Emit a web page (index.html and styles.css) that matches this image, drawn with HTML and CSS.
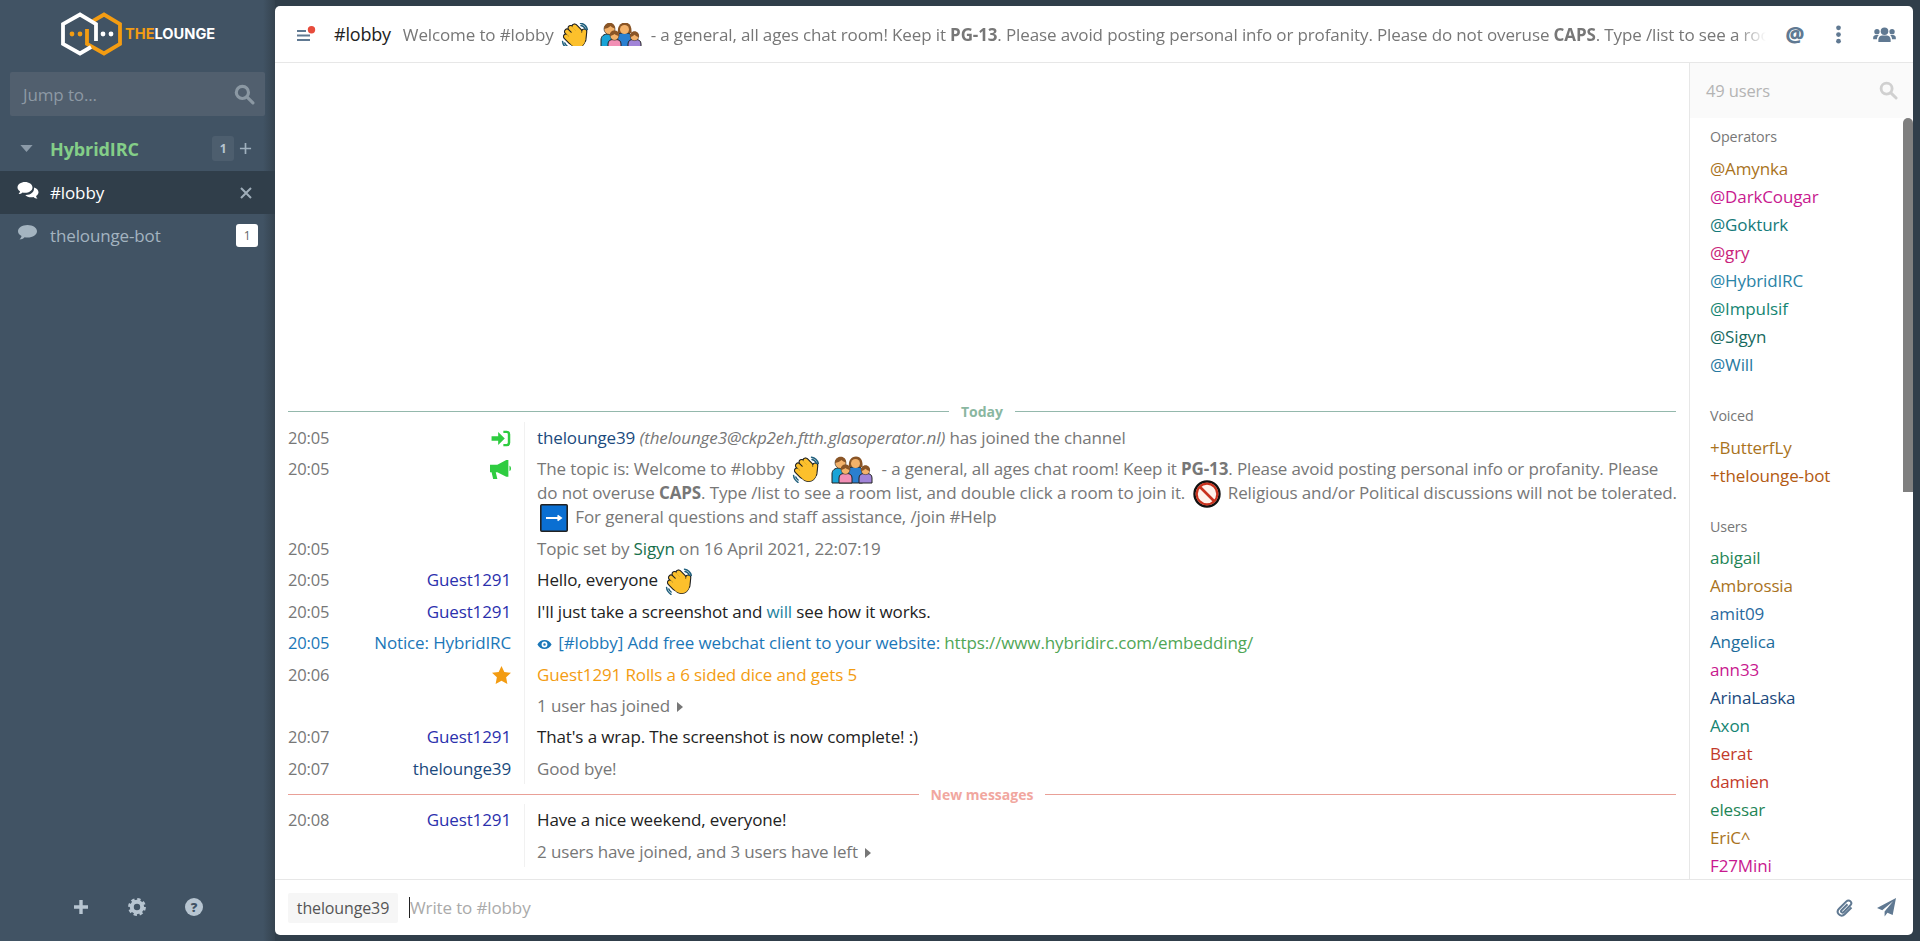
FILE: index.html
```html
<!DOCTYPE html>
<html lang="en">
<head>
<meta charset="utf-8">
<title>#lobby — The Lounge</title>
<link rel="stylesheet" href="styles.css">
</head>
<body>
<svg class="defs" aria-hidden="true">
  <symbol id="hand-shape" viewBox="0 0 28 28">
    <ellipse cx="16" cy="17" rx="8" ry="8.600" transform="rotate(-40 16 17)"/>
    <rect x="1.500" y="14.500" width="12" height="5" rx="2.500" transform="rotate(45 7.500 17)"/>
    <rect x="2.200" y="10.300" width="14" height="5" rx="2.500" transform="rotate(45 9.200 12.800)"/>
    <rect x="5.800" y="6.700" width="14" height="5" rx="2.500" transform="rotate(45 12.800 9.200)"/>
    <rect x="10" y="4.500" width="12" height="5" rx="2.500" transform="rotate(45 16 7)"/>
    <rect x="20.300" y="7" width="5" height="13" rx="2.500" transform="rotate(6 22.800 13.500)"/>
  </symbol>
  <symbol id="wave" viewBox="0 0 28 28">
    <use href="#hand-shape" fill="#222" stroke="#222" stroke-width="1.200"/>
    <g fill="#fcc02c">
      <ellipse cx="16" cy="17" rx="8" ry="8.600" transform="rotate(-40 16 17)"/>
      <rect x="2" y="15" width="11" height="4" rx="2" transform="rotate(45 7.500 17)"/>
      <rect x="2.700" y="10.800" width="13" height="4" rx="2" transform="rotate(45 9.200 12.800)"/>
      <rect x="6.300" y="7.200" width="13" height="4" rx="2" transform="rotate(45 12.800 9.200)"/>
      <rect x="10.500" y="5" width="11" height="4" rx="2" transform="rotate(45 16 7)"/>
      <rect x="20.800" y="7.500" width="4" height="12" rx="2" transform="rotate(6 22.800 13.500)"/>
    </g>
    <path d="M1.600 19.500c.2 2.800 1.600 5 4.400 6.800M3.800 21c.5 1.300 1.200 2.200 2.300 3M19.500 1.200c3.400.5 5.900 2.800 6.800 6.300M20 3.600c2 .4 3.500 1.600 4.200 3.600" fill="none" stroke="#1f5f7d" stroke-width="1.500" stroke-linecap="round"/>
  </symbol>
  <symbol id="family" viewBox="0 0 44 28">
    <path d="M2 27v-9c0-4 3-6 7-6h3c4 0 6 2 6 6v9z" fill="#1aa3d6" stroke="#222"/>
    <circle cx="10.500" cy="7" r="5.500" fill="#f4b26a" stroke="#222" stroke-width=".6"/>
    <path d="M5 7c0-4 2.500-6.200 5.800-6.200S16 3 16 6.500c-2-.5-3.500-1.500-4.500-2.500C10 5.500 7.500 6.500 5 7z" fill="#8a5526"/>
    <path d="M18 27V15c0-2 2-4 5-4h5c3 0 4.500 2 4.500 4v12z" fill="#2a7fd0" stroke="#222"/>
    <path d="M19 11c-1-6 2-10.500 7-10.500S33 5 32.500 11z" fill="#8a5526"/>
    <circle cx="25.500" cy="7.500" r="4.500" fill="#f4b26a"/>
    <path d="M9 27v-5c0-3 2-4.500 5-4.500h3c3 0 5 1.500 5 4.500v5z" fill="#f28fb5" stroke="#222"/>
    <circle cx="15.500" cy="14" r="4.300" fill="#f4b26a" stroke="#222" stroke-width=".5"/>
    <path d="M10.700 14c-.2-3.500 2-5.500 4.800-5.500s5 2 4.800 5.500c-2-.3-3.500-1-4.800-2-1.300 1-2.800 1.700-4.800 2z" fill="#8a5526"/>
    <path d="M29 27v-5c0-3 2-4.500 5-4.500h3c3 0 5 1.500 5 4.500v5z" fill="#a184d8" stroke="#222"/>
    <circle cx="35.500" cy="14.500" r="4.100" fill="#f4b26a" stroke="#222" stroke-width=".5"/>
    <path d="M31 15c-.5-3.500 1.800-5.800 4.500-5.800S40.500 11.500 40 15c-2-.3-3.300-1-4.500-2.200-1.200 1.200-2.500 1.900-4.500 2.200z" fill="#8a5526"/>
  </symbol>
  <symbol id="noentry" viewBox="0 0 28 28">
    <circle cx="14" cy="14" r="12.500" fill="#fff3ec" stroke="#111" stroke-width="2.400"/>
    <circle cx="14" cy="14" r="10.300" fill="none" stroke="#c8321e" stroke-width="2.200"/>
    <path d="M7 7l14 14" stroke="#c8321e" stroke-width="2.600"/>
  </symbol>
  <symbol id="arrow" viewBox="0 0 28 28">
    <rect x=".8" y=".8" width="26.400" height="26.400" rx="1" fill="#0a6fd2" stroke="#222" stroke-width="1.600"/>
    <path d="M6 14h15M17.500 11.500l3.500 2.500-3.500 2.500" fill="none" stroke="#fff" stroke-width="1.800"/>
  </symbol>
</svg>

<aside class="sidebar">
  <div class="brand">
    <svg class="brand-mark" viewBox="0 0 64 44">
      <polyline points="33,9 44,2.500 60,12 60,32 44,41.500 27,32 27,17" class="hex-orange"/>
      <polyline points="31,35 20,41.500 3,32 3,12 20,2.500 36,12 36,29" class="hex-white"/>
      <circle cx="12" cy="22" r="2.400" class="dot-orange"/><circle cx="20" cy="22" r="2.400" class="dot-orange"/>
      <circle cx="43" cy="22" r="2.400" class="dot-white"/><circle cx="51" cy="22" r="2.400" class="dot-white"/>
    </svg>
    <span class="brand-text"><span class="brand-the">THE</span>LOUNGE</span>
  </div>
  <div class="jump">
    <span class="jump-text">Jump to...</span>
    <svg class="jump-icon" viewBox="0 0 20 20"><circle cx="8" cy="8" r="5.800"/><path d="M12.500 12.500l5.500 5.500"/></svg>
  </div>
  <div class="network">
    <svg class="caret-down" viewBox="0 0 14 8"><path d="M0 0h14L7 8z"/></svg>
    <span class="network-name">HybridIRC</span>
    <span class="network-badge">1</span>
    <svg class="network-add" viewBox="0 0 14 14"><path d="M7 1v12M1 7h12"/></svg>
  </div>
  <div class="channel channel-active">
    <svg class="channel-icon" viewBox="0 0 22 18"><path class="bubble-white" d="M8 1c4 0 7.500 2.300 7.500 5.400S12 11.800 8 11.800c-.9 0-1.700-.1-2.500-.3C4.500 12.500 3 13 1.500 13c.8-.8 1.400-1.800 1.500-2.800C1.400 9.300.5 7.900.5 6.400.5 3.300 4 1 8 1z"/><path class="bubble-white" d="M17 6.500c2.600.7 4.500 2.500 4.500 4.700 0 1.500-.9 2.800-2.400 3.700.1 1 .7 2 1.400 2.600-1.500 0-3-.5-4-1.500-.7.2-1.500.3-2.400.3-2.400 0-4.600-.9-5.800-2.300 5.400.3 9.300-3.100 8.700-7.500z"/></svg>
    <span class="channel-name">#lobby</span>
    <svg class="channel-close" viewBox="0 0 12 12"><path d="M1 1l10 10M11 1L1 11"/></svg>
  </div>
  <div class="channel">
    <svg class="channel-icon" viewBox="0 0 22 18"><path class="bubble-muted" d="M10.500 1C15.800 1 20 3.800 20 7.300s-4.200 6.300-9.500 6.300c-1 0-2-.1-2.900-.3C6.300 14.700 4.500 15.500 2.500 15.500c1-1 1.800-2.100 2-3.400C2.400 11 1 9.300 1 7.300 1 3.800 5.200 1 10.500 1z"/></svg>
    <span class="channel-name channel-name-muted">thelounge-bot</span>
    <span class="channel-badge">1</span>
  </div>
  <div class="sidebar-spacer"></div>
  <div class="sidebar-footer">
    <svg class="foot-plus" viewBox="0 0 16 16"><path d="M8 1v14M1 8h14"/></svg>
    <svg class="foot-cog" viewBox="0 0 18 18"><circle cx="9" cy="9" r="5.200" class="cog-body"/><circle cx="9" cy="9" r="7.600" class="cog-teeth"/></svg>
    <span class="foot-help">?</span>
  </div>
</aside>

<main class="card">
  <header class="topbar">
    <svg class="menu-icon" viewBox="0 0 20 16"><path class="menu-lines" d="M1 5h9M1 9.500h13M1 14h13"/><circle cx="15.500" cy="3.700" r="3.700" class="menu-dot"/></svg>
    <span class="top-channel">#lobby</span>
    <div class="top-topic">Welcome to #lobby <svg class="emoji"><use href="#wave"/></svg> <svg class="emoji emoji-family"><use href="#family"/></svg> - a general, all ages chat room! Keep it <b>PG-13</b>. Please avoid posting personal info or profanity. Please do not overuse <b>CAPS</b>. Type /list to see a room list, and double click a room to join it.</div>
    <span class="top-at">@</span>
    <svg class="top-kebab" viewBox="0 0 6 20"><circle cx="3" cy="3" r="2.500"/><circle cx="3" cy="10" r="2.500"/><circle cx="3" cy="17" r="2.500"/></svg>
    <svg class="top-users" viewBox="0 0 24 18"><circle cx="12" cy="5.500" r="4"/><path d="M5.500 17v-2.500c0-3 2-4.500 4-4.500h5c2 0 4 1.500 4 4.500V17z"/><circle cx="4" cy="6" r="2.800"/><circle cx="20" cy="6" r="2.800"/><path d="M0 14v-1.500C0 10.500 1.500 9.500 3 9.500h3c-1 1-2 2.500-2 4.500zM24 14v-1.500c0-2-1.500-3-3-3h-3c1 1 2 2.500 2 4.500z"/></svg>
  </header>
  <div class="body-row">
    <section class="chat">
      <div class="marker marker-date"><span class="marker-label">Today</span></div>

      <div class="row">
        <span class="time">20:05</span>
        <span class="from"><svg class="ico-join" viewBox="0 0 20 18"><path d="M0 6.500h7V2l7 7-7 7v-4.500H0z"/><path class="ico-join-bracket" d="M12.500 2H16c1.500 0 2.500 1 2.500 2.500v9c0 1.500-1 2.500-2.500 2.500h-3.500"/></svg></span>
        <div class="content"><span class="nick-navy">thelounge39</span> <i class="hostmask">(thelounge3@ckp2eh.ftth.glasoperator.nl)</i> <span class="muted">has joined the channel</span></div>
      </div>
      <div class="row row-topic">
        <span class="time">20:05</span>
        <span class="from"><svg class="ico-bullhorn" viewBox="0 0 20 18"><path d="M0 4.500h7L15.500 0H17.500V16H15.500L7 11.500H5.500L7 18H3L1.500 11.500H0z"/><path d="M18.500 5.500c.9.300 1.500 1.300 1.500 2.500s-.6 2.200-1.500 2.500z"/></svg></span>
        <div class="content muted">The topic is: Welcome to #lobby <svg class="emoji"><use href="#wave"/></svg> <svg class="emoji emoji-family"><use href="#family"/></svg> - a general, all ages chat room! Keep it <b>PG-13</b>. Please avoid posting personal info or profanity. Please<br>do not overuse <b>CAPS</b>. Type /list to see a room list, and double click a room to join it. <svg class="emoji"><use href="#noentry"/></svg> Religious and/or Political discussions will not be tolerated.<br><svg class="emoji"><use href="#arrow"/></svg> For general questions and staff assistance, /join #Help</div>
      </div>
      <div class="row">
        <span class="time">20:05</span>
        <span class="from"></span>
        <div class="content muted">Topic set by <span class="nick-sigyn">Sigyn</span> on 16 April 2021, 22:07:19</div>
      </div>
      <div class="row">
        <span class="time">20:05</span>
        <span class="from nick-guest">Guest1291</span>
        <div class="content">Hello, everyone <svg class="emoji"><use href="#wave"/></svg></div>
      </div>
      <div class="row">
        <span class="time">20:05</span>
        <span class="from nick-guest">Guest1291</span>
        <div class="content">I'll just take a screenshot and <span class="nick-will">will</span> see how it works.</div>
      </div>
      <div class="row row-notice">
        <span class="time">20:05</span>
        <span class="from">Notice: HybridIRC</span>
        <div class="content"><svg class="ico-eye" viewBox="0 0 18 12"><path fill-rule="evenodd" d="M9 .5c3.800 0 7 2.400 8.500 5.500C16 9.100 12.800 11.500 9 11.500S2 9.100.5 6C2 2.900 5.200.5 9 .5zM9 2.500a3.500 3.500 0 100 7 3.500 3.500 0 000-7zM9 4.500a1.500 1.500 0 110 3 1.500 1.500 0 010-3z"/></svg> [#lobby] Add free webchat client to your website: <span class="link">https://www.hybridirc.com/embedding/</span></div>
      </div>
      <div class="row row-action">
        <span class="time">20:06</span>
        <span class="from"><svg class="ico-star" viewBox="0 0 20 19"><path d="M10 0l3 6.300 7 .9-5.100 4.800 1.300 6.900L10 15.600l-6.200 3.300L5.100 12 0 7.200l7-.9z"/></svg></span>
        <div class="content">Guest1291 Rolls a 6 sided dice and gets 5</div>
      </div>
      <div class="row">
        <span class="time"></span>
        <span class="from"></span>
        <div class="content muted">1 user has joined <svg class="ico-caret" viewBox="0 0 6 10"><path d="M0 0l6 5-6 5z"/></svg></div>
      </div>
      <div class="row">
        <span class="time">20:07</span>
        <span class="from nick-guest">Guest1291</span>
        <div class="content">That's a wrap. The screenshot is now complete! :)</div>
      </div>
      <div class="row">
        <span class="time">20:07</span>
        <span class="from nick-navy">thelounge39</span>
        <div class="content muted">Good bye!</div>
      </div>

      <div class="marker marker-new"><span class="marker-label">New messages</span></div>

      <div class="row">
        <span class="time">20:08</span>
        <span class="from nick-guest">Guest1291</span>
        <div class="content">Have a nice weekend, everyone!</div>
      </div>
      <div class="row">
        <span class="time"></span>
        <span class="from"></span>
        <div class="content muted">2 users have joined, and 3 users have left <svg class="ico-caret" viewBox="0 0 6 10"><path d="M0 0l6 5-6 5z"/></svg></div>
      </div>
    </section>

    <aside class="users">
      <div class="users-head">
        <span class="users-count">49 users</span>
        <svg class="users-search" viewBox="0 0 20 20"><circle cx="8" cy="8" r="5.800"/><path d="M12.500 12.500l5.500 5.500"/></svg>
      </div>
      <div class="users-list">
        <div class="users-scroll"></div>
        <div class="group-label">Operators</div>
        <div class="user c-amber">@Amynka</div>
        <div class="user c-magenta">@DarkCougar</div>
        <div class="user c-teal">@Gokturk</div>
        <div class="user c-rose">@gry</div>
        <div class="user c-sky">@HybridIRC</div>
        <div class="user c-sea">@Impulsif</div>
        <div class="user c-pine">@Sigyn</div>
        <div class="user c-steel">@Will</div>
        <div class="group-label group-next">Voiced</div>
        <div class="user c-amber">+ButterfLy</div>
        <div class="user c-rust">+thelounge-bot</div>
        <div class="group-label group-next group-tight">Users</div>
        <div class="user c-green">abigail</div>
        <div class="user c-amber">Ambrossia</div>
        <div class="user c-blue">amit09</div>
        <div class="user c-blue2">Angelica</div>
        <div class="user c-magenta">ann33</div>
        <div class="user c-navy">ArinaLaska</div>
        <div class="user c-sea">Axon</div>
        <div class="user c-red">Berat</div>
        <div class="user c-red">damien</div>
        <div class="user c-green">elessar</div>
        <div class="user c-amber">EriC^</div>
        <div class="user c-magenta">F27Mini</div>
      </div>
    </aside>
  </div>
  <footer class="inputbar">
    <span class="nick-box">thelounge39</span>
    <div class="input-field"><span class="caret-line"></span><span class="placeholder">Write to #lobby</span></div>
    <svg class="ico-clip" viewBox="0 0 18 20"><path d="M15.500 9.500l-6.800 6.800c-1.800 1.800-4.500 1.800-6-.1-1.400-1.600-1.200-3.900.3-5.400l7.400-7.400c1.200-1.200 3-1.200 4.100 0 1 1.100 1 2.800-.1 3.900l-6.900 6.900c-.6.600-1.500.6-2 0-.5-.5-.5-1.400 0-1.900l6-6"/></svg>
    <svg class="ico-send" viewBox="0 0 20 20"><path d="M20 0L16.500 18l-5.500-2.400L8 19.500v-5.200L17 3.500 5.500 13 0 10.500z"/></svg>
  </footer>
</main>
</body>
</html>
```
FILE: styles.css
```css
* { box-sizing: border-box; }
html, body { height: 100%; margin: 0; }
body {
  display: flex;
  overflow: hidden;
  background: #303e4a;
  font-family: "Open Sans", "Noto Sans", sans-serif;
  font-size: 17px;
  letter-spacing: -0.13px;
  color: #222;
}
.defs { position: absolute; width: 0; height: 0; }

/* sidebar */
.sidebar {
  width: 275px;
  flex: none;
  display: flex;
  flex-direction: column;
  background: linear-gradient(to right, #415364 263px, #35434f 275px);
  color: #b7c5d1;
}
.brand { height: 68px; display: flex; align-items: center; padding-left: 60px; gap: 1px; }
.brand-mark { width: 64px; height: 44px; flex: none; fill: none; }
.hex-orange { fill: none; stroke: #f39c12; stroke-width: 3.8; }
.hex-white { fill: none; stroke: #fff; stroke-width: 3.8; }
.dot-orange { fill: #f39c12; }
.dot-white { fill: #fff; }
.brand-text { font-family: Inter, sans-serif; font-weight: 700; font-size: 14.6px; letter-spacing: 0; color: #fff; }
.brand-the { color: #f39c12; }
.jump {
  margin: 4px 10px 0;
  height: 44px;
  flex: none;
  display: flex;
  align-items: center;
  justify-content: space-between;
  padding: 0 10px 0 13px;
  background: #515f6e;
  border-radius: 2px;
}
.jump-text { color: #8d99a4; font-size: 17px; }
.jump-icon { width: 21px; height: 21px; fill: none; stroke: #8b98a3; stroke-width: 3; stroke-linecap: round; }
.network { margin: 15px 0 5px; height: 35px; flex: none; display: flex; align-items: center; padding-left: 20px; }
.caret-down { width: 13px; height: 7px; fill: #8b9aa8; flex: none; }
.network-name { margin-left: 17px; font-weight: 700; font-size: 18px; color: #84ce88; flex: 1; letter-spacing: -0.1px; }
.network-badge {
  width: 22px; height: 25px; display: flex; align-items: center; justify-content: center;
  background: #4d5e6e; border-radius: 3px; font-size: 12px; font-weight: 700; color: #b7c5d1;
}
.network-add { width: 13px; height: 13px; margin: 0 23px 0 5px; fill: none; stroke: #9fb0be; stroke-width: 1.800; }
.channel { height: 43px; flex: none; display: flex; align-items: center; padding-left: 17px; font-size: 17px; }
.channel-active { background: #303e4a; color: #fff; }
.channel-icon { width: 22px; height: 18px; flex: none; margin-top: -5px; }
.bubble-white { fill: #fff; }
.bubble-muted { fill: #a4b4c0; }
.channel-name { margin-left: 11px; flex: 1; }
.channel-name-muted { color: #a4b4c0; }
.channel-close { width: 12px; height: 12px; margin-right: 23px; fill: none; stroke: #9fadb9; stroke-width: 2; }
.channel-badge {
  width: 22px; height: 23px; margin-right: 17px; background: #fff; color: #666; border-radius: 3px;
  font-size: 12px; display: flex; align-items: center; justify-content: center;
}
.sidebar-spacer { flex: 1; }
.sidebar-footer { height: 68px; flex: none; display: flex; align-items: center; padding-left: 73px; gap: 39px; }
.foot-plus { width: 16px; height: 16px; fill: none; stroke: #b7c5d1; stroke-width: 3.400; }
.foot-cog { width: 18px; height: 18px; fill: none; }
.cog-body { stroke: #b7c5d1; stroke-width: 4; }
.cog-teeth { stroke: #b7c5d1; stroke-width: 2.600; stroke-dasharray: 3.300 2.670; }
.foot-help {
  width: 18px; height: 18px; flex: none; border-radius: 50%; background: #b7c5d1; color: #415364;
  font-size: 13px; font-weight: 800; letter-spacing: 0; display: flex; align-items: center; justify-content: center;
}

/* main card */
.card {
  flex: 1;
  min-width: 0;
  margin: 6px 7px 6px 0;
  display: flex;
  flex-direction: column;
  background: #fff;
  border-radius: 5px;
  overflow: hidden;
}
.topbar {
  height: 57px;
  flex: none;
  display: flex;
  align-items: center;
  padding-left: 21px;
  border-bottom: 1px solid #e7e7e7;
}
.menu-icon { width: 20px; height: 16px; flex: none; }
.menu-lines { fill: none; stroke: #607992; stroke-width: 1.900; }
.menu-dot { fill: #e74c3c; }
.top-channel { margin-left: 18px; font-size: 18px; letter-spacing: -0.2px; flex: none; color: #222; }
.top-topic {
  margin-left: 12px;
  flex: 1;
  min-width: 0;
  white-space: nowrap;
  overflow: hidden;
  color: #777;
  -webkit-mask-image: linear-gradient(to right, #000 calc(100% - 30px), transparent);
  mask-image: linear-gradient(to right, #000 calc(100% - 30px), transparent);
}
.top-topic b { font-weight: 700; }
.top-at { margin-left: 17px; font-size: 21px; font-weight: 800; color: #607992; width: 24px; letter-spacing: 0; text-align: center; flex: none; }
.top-kebab { margin-left: 28px; width: 7px; height: 19px; fill: #607992; flex: none; }
.top-users { margin: 0 17px 0 31px; width: 23px; height: 17px; fill: #607992; flex: none; }

.body-row { flex: 1; min-height: 0; display: flex; }
.chat {
  flex: 1;
  min-width: 0;
  display: flex;
  flex-direction: column;
  justify-content: flex-end;
  padding: 0 13px 12px 13px;
  overflow: hidden;
}
.marker { height: 20px; flex: none; display: flex; align-items: center; justify-content: center; font-size: 14px; font-weight: 700; letter-spacing: 0; }
.marker::before, .marker::after { content: ""; flex: 1; height: 1px; }
.marker-label { padding: 0 12px; }
.marker-date { color: #8ab7a1; }
.marker-date::before, .marker-date::after { background: #94b8ac; }
.marker-new { color: #f1a79f; }
.marker-new::before, .marker-new::after { background: #e9a097; }

.row { display: flex; flex: none; }
.time { width: 64px; flex: none; padding: 4px 0; line-height: 23.400px; color: #777; font-size: 16.500px; }
.from {
  width: 159px; flex: none; padding: 4px 0; line-height: 23.400px; text-align: right;
  display: flex; justify-content: flex-end; align-items: flex-start; white-space: nowrap;
}
.content {
  flex: 1; min-width: 0; margin-left: 13px; padding: 4px 0 4px 12px; line-height: 23.400px;
  border-left: 1px solid #f1f1f1; white-space: nowrap; color: #222;
}
.row-topic .content { line-height: 24px; }
.muted { color: #777; }
.muted b { font-weight: 700; }
.hostmask { color: #777; }
.nick-navy { color: #1b4a7d; }
.nick-guest { color: #2b30ad; }
.nick-sigyn { color: #176f4b; }
.nick-will { color: #24839f; }
.row-notice .time, .row-notice .from, .row-notice .content { color: #1b77b8; }
.row-action .content { color: #f39c12; }
.link { color: #50a656; }
.ico-join { width: 20px; height: 17px; margin-top: 4px; fill: #2ecc40; }
.ico-join-bracket { fill: none; stroke: #2ecc40; stroke-width: 2.600; }
.ico-bullhorn { width: 21px; height: 19px; margin-top: 3px; fill: #2ecc40; }
.ico-star { width: 19px; height: 18px; margin-top: 3px; fill: #f39c12; }
.ico-eye { width: 15px; height: 11px; fill: #1b77b8; vertical-align: -1px; margin-right: 2px; }
.ico-caret { width: 6px; height: 10px; fill: #777; margin-left: 3px; vertical-align: 0; }

.emoji { width: 28px; height: 28px; vertical-align: middle; margin: -6px 3px -6px 3px; }
.emoji-family { width: 44px; }

/* user list */
.users { width: 224px; flex: none; display: flex; flex-direction: column; border-left: 1px solid #e7e7e7; min-height: 0; }
.users-head {
  height: 55px; flex: none; display: flex; align-items: center; justify-content: space-between;
  padding: 0 15px 0 16px; background: #fafafa;
}
.users-count { color: #b4b4b4; font-size: 16.500px; }
.users-search { width: 19px; height: 19px; fill: none; stroke: #d0d0d0; stroke-width: 3; stroke-linecap: round; }
.users-list { flex: 1; min-height: 0; overflow: hidden; position: relative; padding: 6px 0 0 20px; }
.users-scroll { position: absolute; top: 0; right: 0; width: 10px; height: 374px; background: #7f7f7f; border-radius: 5px 5px 0 0; }
.group-label { height: 26px; line-height: 26px; font-size: 14.300px; color: #777; }
.group-next { margin-top: 24px; }
.group-tight { margin-bottom: -1px; }
.user { height: 28px; line-height: 28px; white-space: nowrap; }
.group-label + .user { margin-top: 5px; }
.c-amber { color: #a9731d; }
.c-magenta { color: #c8198f; }
.c-teal { color: #157a7a; }
.c-rose { color: #c9237a; }
.c-sky { color: #2a84a6; }
.c-sea { color: #148572; }
.c-pine { color: #176a5e; }
.c-steel { color: #2779a1; }
.c-rust { color: #b35a12; }
.c-green { color: #1f8557; }
.c-blue { color: #2a6aa0; }
.c-blue2 { color: #1d6d9b; }
.c-navy { color: #1b4a7d; }
.c-red { color: #c23a2a; }

/* input */
.inputbar {
  height: 56px;
  flex: none;
  display: flex;
  align-items: center;
  padding: 0 17px 0 13px;
  border-top: 1px solid #e7e7e7;
}
.nick-box {
  width: 110px; height: 30px; flex: none; display: flex; align-items: center; justify-content: center;
  background: #f6f6f6; border-radius: 2px; color: #555; font-size: 16px;
}
.input-field { flex: 1; margin-left: 11px; display: flex; align-items: center; height: 24px; }
.caret-line { width: 1px; height: 21px; background: #222; flex: none; }
.placeholder { color: #aaa; }
.ico-clip { width: 18px; height: 20px; fill: none; stroke: #607992; stroke-width: 2; flex: none; }
.ico-send { width: 19px; height: 19px; margin-left: 23px; fill: #607992; flex: none; }
```
